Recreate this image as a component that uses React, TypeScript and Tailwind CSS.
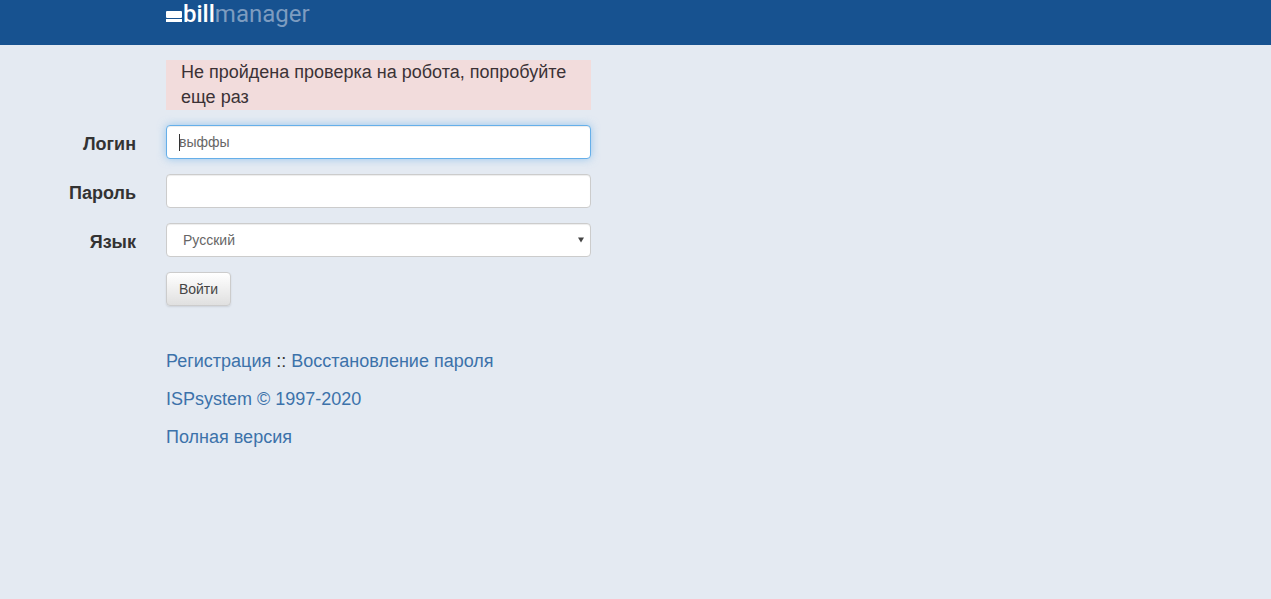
export default function App() {
  const font = { fontFamily: '"Liberation Sans", Arial, sans-serif' };
  return (
    <div className="min-h-[599px] bg-[#e4eaf2] text-[#333333]" style={font}>
      <header className="h-[45px] bg-[#175290] pl-[166px] overflow-hidden">
        <div className="flex items-start h-[30px]">
          <svg width="16" height="12" viewBox="0 0 16 12" className="mt-[11px]">
            <rect x="0" y="0" width="16" height="7" rx="1" fill="#ffffff" />
            <rect x="0" y="8" width="16" height="3" fill="#ffffff" />
          </svg>
          <span className="ml-[1px] -mt-[1px] text-[24px] leading-[30px] font-['Roboto',sans-serif] font-medium text-white">bill</span>
          <span className="-mt-[1px] text-[24px] leading-[30px] font-['Roboto',sans-serif] font-normal text-[#7d9cc0]">manager</span>
        </div>
      </header>
      <main className="flex flex-col pt-[15px]">
        <div className="ml-[166px] w-[425px] h-[50px] bg-[#f2dcdc] pl-[15px] text-[18px] leading-[25px] text-[#3b3236]">
          Не пройдена проверка на робота, попробуйте еще раз
        </div>
        <div className="flex flex-col gap-[15px] mt-[15px]">
          <div className="flex items-start">
            <label className="w-[136px] pt-[6px] text-right text-[18px] leading-[27px] font-bold">Логин</label>
            <div className="relative ml-[30px] w-[425px] h-[34px] bg-white border border-[#66afe9] rounded-[4px] pl-[12px] flex items-center text-[14px] text-[#666666] shadow-[inset_0_1px_1px_rgba(0,0,0,0.075),0_0_8px_rgba(102,175,233,0.6)]">
              <span className="absolute left-[12px] top-[8px] w-px h-[17px] bg-[#333333]" />
              выффы
            </div>
          </div>
          <div className="flex items-start">
            <label className="w-[136px] pt-[6px] text-right text-[18px] leading-[27px] font-bold">Пароль</label>
            <div className="ml-[30px] w-[425px] h-[34px] bg-white border border-[#cccccc] rounded-[4px] shadow-[inset_0_1px_1px_rgba(0,0,0,0.075)]" />
          </div>
          <div className="flex items-start">
            <label className="w-[136px] pt-[6px] text-right text-[18px] leading-[27px] font-bold">Язык</label>
            <div className="ml-[30px] w-[425px] h-[34px] bg-white border border-[#cccccc] rounded-[4px] pl-[16px] pr-[6px] flex items-center justify-between text-[14px] text-[#666666] shadow-[inset_0_1px_1px_rgba(0,0,0,0.075)]">
              <span>Русский</span>
              <svg width="6" height="6" viewBox="0 0 6 6"><path d="M0 0.5H6L3 5.5Z" fill="#444444" /></svg>
            </div>
          </div>
          <div className="pl-[166px]">
            <button className="w-[65px] h-[34px] rounded-[4px] border border-[#cccccc] bg-gradient-to-b from-white to-[#e0e0e0] text-[14px] text-[#444444] shadow-[0_1px_2px_rgba(0,0,0,0.1)]">
              Войти
            </button>
          </div>
        </div>
        <div className="ml-[166px] mt-[43px] flex flex-col gap-[13px] text-[18px] leading-[25px]">
          <p>
            <a className="text-[#3c72aa]">Регистрация</a>
            <span className="text-[#333333]"> :: </span>
            <a className="text-[#3c72aa]">Восстановление пароля</a>
          </p>
          <p className="text-[#3c72aa]">ISPsystem © 1997-2020</p>
          <p className="text-[#3c72aa]">Полная версия</p>
        </div>
      </main>
    </div>
  );
}
